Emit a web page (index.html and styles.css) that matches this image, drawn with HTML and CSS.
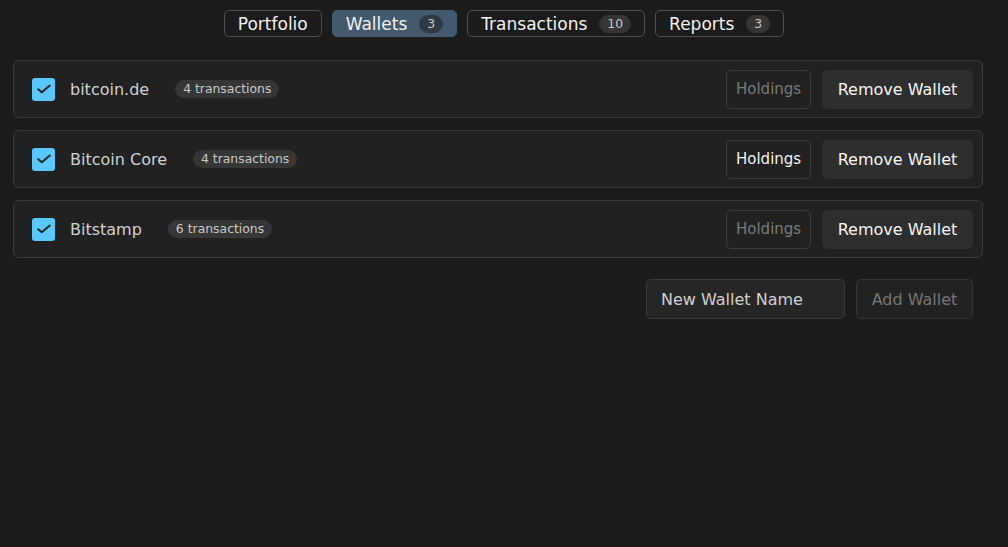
FILE: index.html
```html
<!DOCTYPE html>
<html>
<head>
<meta charset="utf-8">
<link rel="stylesheet" href="styles.css">
</head>
<body>
<nav class="tabs">
  <button class="tab">Portfolio</button>
  <button class="tab active">Wallets <span class="badge">3</span></button>
  <button class="tab">Transactions <span class="badge">10</span></button>
  <button class="tab">Reports <span class="badge">3</span></button>
</nav>
<main class="wallets">
  <div class="card">
    <span class="check"><svg width="16" height="16" viewBox="0 0 16 16"><path d="M2.2 8.2 L5.8 11.3 L13.8 4.6" fill="none" stroke="#1c262c" stroke-width="2" stroke-linecap="round" stroke-linejoin="round"/></svg></span>
    <span class="name">bitcoin.de</span>
    <span class="badge count">4 transactions</span>
    <span class="spacer"></span>
    <button class="btn outline disabled">Holdings</button>
    <button class="btn solid">Remove Wallet</button>
  </div>
  <div class="card">
    <span class="check"><svg width="16" height="16" viewBox="0 0 16 16"><path d="M2.2 8.2 L5.8 11.3 L13.8 4.6" fill="none" stroke="#1c262c" stroke-width="2" stroke-linecap="round" stroke-linejoin="round"/></svg></span>
    <span class="name">Bitcoin Core</span>
    <span class="badge count">4 transactions</span>
    <span class="spacer"></span>
    <button class="btn outline">Holdings</button>
    <button class="btn solid">Remove Wallet</button>
  </div>
  <div class="card">
    <span class="check"><svg width="16" height="16" viewBox="0 0 16 16"><path d="M2.2 8.2 L5.8 11.3 L13.8 4.6" fill="none" stroke="#1c262c" stroke-width="2" stroke-linecap="round" stroke-linejoin="round"/></svg></span>
    <span class="name">Bitstamp</span>
    <span class="badge count">6 transactions</span>
    <span class="spacer"></span>
    <button class="btn outline disabled">Holdings</button>
    <button class="btn solid">Remove Wallet</button>
  </div>
  <div class="add-row">
    <input class="input" type="text" placeholder="New Wallet Name">
    <button class="btn add">Add Wallet</button>
  </div>
</main>
</body>
</html>
```
FILE: styles.css
```css
html, body {
  margin: 0;
  padding: 0;
  background: #1b1b1b;
  font-family: "DejaVu Sans", sans-serif;
  color: #d2d2d2;
  height: 100%;
}
button, input {
  font-family: "DejaVu Sans", sans-serif;
}
.tabs {
  display: flex;
  justify-content: center;
  gap: 10px;
  padding-top: 10px;
}
.tab {
  display: flex;
  align-items: center;
  gap: 12px;
  height: 27px;
  padding: 0 13px;
  background: transparent;
  border: 1px solid #4e4e4e;
  border-radius: 5px;
  color: #f0f0f0;
  font-size: 17px;
  line-height: 20px;
}
.tab.active {
  background: #435a6e;
  border-color: #435a6e;
}
.badge {
  display: inline-block;
  background: #363636;
  color: #c8c8c8;
  font-size: 12.4px;
  line-height: 14px;
  padding: 2px 8px;
  border-radius: 9px;
}
.tab.active .badge {
  background: #2f3944;
}
.wallets {
  display: flex;
  flex-direction: column;
  gap: 12px;
  margin: 23px 25px 0 13px;
}
.card {
  display: flex;
  align-items: center;
  height: 56px;
  border: 1px solid #393939;
  border-radius: 6px;
  background: #212121;
  padding: 0 9px 0 18px;
}
.check {
  width: 23px;
  height: 23px;
  border-radius: 3px;
  background: #5ac8fa;
  display: flex;
  align-items: center;
  justify-content: center;
  margin-right: 15px;
}
.name {
  font-size: 16px;
  color: #d0d0d0;
  margin-right: 26px;
}
.spacer {
  flex: 1;
}
.btn {
  height: 39px;
  border-radius: 5px;
  font-size: 16px;
}
.outline {
  background: transparent;
  border: 1px solid #3c3c3c;
  color: #f0f0f0;
  font-size: 15px;
  padding: 0 9px;
  width: 85px;
  margin-right: 11px;
}
.outline.disabled {
  color: #7a7a7a;
}
.solid {
  background: #2e2e2e;
  border: 1px solid #2e2e2e;
  color: #f4f4f4;
  width: 151px;
}
.add-row {
  display: flex;
  justify-content: flex-end;
  gap: 11px;
  padding-right: 10px;
  margin-top: 9px;
}
.input {
  width: 199px;
  height: 40px;
  box-sizing: border-box;
  background: #262626;
  border: 1px solid #3a3a3a;
  border-radius: 5px;
  padding: 0 14px;
  font-size: 16px;
  color: #d0d0d0;
  outline: none;
}
.input::placeholder {
  color: #cfcfcf;
  opacity: 1;
}
.add {
  height: 40px;
  width: 117px;
  background: #222222;
  border: 1px solid #363636;
  color: #767676;
}
```
